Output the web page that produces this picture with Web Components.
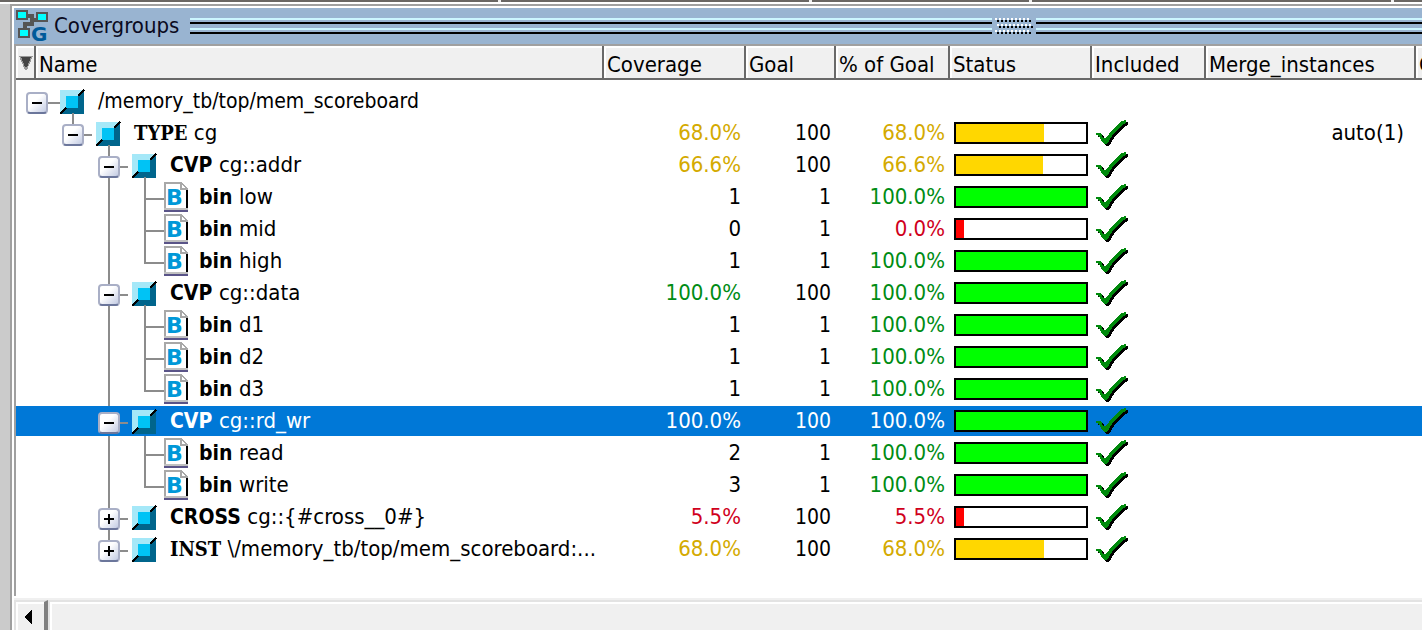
<!DOCTYPE html>
<html lang="en">
<head>
<meta charset="utf-8">
<title>Covergroups</title>
<style>
  html, body { height: 100%; margin: 0; }
  body { overflow: hidden; background: #fff; color: #000; font: 22px/32px "DejaVu Sans Condensed", "DejaVu Sans", sans-serif; }
</style>
</head>
<body>
<dock-pane>
  <pane-title slot="title">Covergroups</pane-title>
  <coverage-table></coverage-table>
  <scroll-strip slot="footer"></scroll-strip>
</dock-pane>

<script>
class Base extends HTMLElement {
  render(html) {
    if (!this.shadowRoot) this.attachShadow({ mode: 'open' });
    this.shadowRoot.innerHTML = html;
  }
}

/* Window frame round the docked pane */
customElements.define('dock-pane', class extends Base {
  connectedCallback() {
    this.render(`
      <style>
        :host { display: flex; flex-direction: column; height: 100vh; }
        .edge { display: grid; grid-template-columns: 500fr 310fr 218fr 361fr 28fr; gap: 0 3px; height: 2px; margin-bottom: 2px; flex: none; background: #f0f0f0; }
        .edge i { background: #696663; }
        .frame { flex: 1; min-height: 0; display: flex; background: #cbcbcb; }
        .pane { flex: 1; min-width: 0; margin-left: 10px; border: solid #a0a0a0; border-width: 2px 0 0 2px; padding: 2px 0 0 2px; background: #fff; display: flex; flex-direction: column; }
        .body { flex: 1; min-height: 0; overflow: hidden; border: solid #a0a0a0; border-width: 2px 0 0 2px; margin-bottom: 2px; }
      </style>
      <div class="edge"><i></i><i></i><i></i><i></i><i></i></div>
      <div class="frame"><div class="pane">
        <slot name="title"></slot>
        <div class="body"><slot></slot></div>
        <slot name="footer"></slot>
      </div></div>`);
  }
});

/* Title bar: icon, caption and drag grip */
customElements.define('pane-title', class extends Base {
  connectedCallback() {
    let dots = '';
    for (let r = 0; r < 3; r++) for (let c = 0; c < 9; c++) {
      const x = c * 4 + (r === 1 ? 2 : 0), y = r * 6;
      dots += `<path fill="#fff" d="M${x} ${y}h2v2h-2z"/><path fill="#000" d="M${x + 2} ${y + 2}h2v2h-2z"/>`;
    }
    this.render(`
      <style>
        :host { display: flex; align-items: center; height: 36px; flex: none; padding-left: 2px; background: #99b4d1; color: #0a0a20; }
        svg { display: block; flex: none; overflow: visible; }
        .caption { margin: 0 11px 0 6px; }
        .rail { flex: 1; display: grid; grid-template-columns: 802fr 38px 386fr; column-gap: 3px; height: 16px; }
        .line { background: linear-gradient(#ccf6ff 0 2px, transparent 2px 4px, #000 4px 6px, transparent 6px 10px, #ccf6ff 10px 12px, transparent 12px 14px, #000 14px 16px); }
      </style>
      <svg width="32" height="32" viewBox="0 0 32 32" aria-hidden="true">
        <path d="M10 6h6v4h6M16 9v5h-7v6" fill="none" stroke="#555" stroke-width="4"/>
        <path d="M0 0h12v10H0zM20 2h12v10H20zM2 18h12v10H2z" fill="#555"/>
        <path d="M2 2h8v6H2zM22 4h8v6h-8zM4 20h8v6H4z" fill="#0ff"/>
        <text x="15" y="31" font-family="DejaVu Sans" font-weight="bold" font-size="20" fill="#005a9a">G</text>
      </svg>
      <span class="caption"><slot></slot></span>
      <div class="rail"><div class="line"></div>
        <svg width="38" height="16" viewBox="0 0 38 16" shape-rendering="crispEdges">${dots}</svg>
        <div class="line"></div></div>`);
  }
});

/* Tree cell: guides, expander, node icon, label */
customElements.define('tree-node', class extends Base {
  connectedCallback() {
    const level = +this.getAttribute('level'), last = this.hasAttribute('last');
    const state = this.getAttribute('state'), leaf = !state;
    const selected = this.hasAttribute('selected');
    const g = [];
    if (level === 0) g.push('M32 18H44M57 28V32');
    if (level === 1) g.push('M57 0V8M68 18H76M93 28V32');
    if (level === 2) {
      g.push('M104 18H112');
      if (selected) g.push('M93 0V1M93 31V32M129 31V32');
      else g.push(last ? 'M93 0V8' : 'M93 0V32', state === 'open' ? 'M129 28V32' : '');
    }
    if (level === 3) g.push('M93 0V32', last ? 'M129 0V19' : 'M129 0V32', 'M129 18H148');
    this.render(`
      <style>
        :host { display: flex; position: relative; height: 32px; white-space: nowrap; }
        svg { display: block; flex: none; overflow: visible; }
        .guides { position: absolute; left: 0; top: 0; }
        .indent { flex: none; width: ${leaf ? 148 : 10 + 36 * level}px; }
        button { position: relative; flex: none; width: 22px; height: 22px; margin: 7px 12px 0 0; padding: 0; border: 2px solid #a9afc6; border-bottom-color: #6b769b; border-radius: 4px; background: linear-gradient(135deg, #fff 40%, #c3cbe3); }
        button svg { width: 18px; height: 18px; }
        .box { margin-top: 5px; }
        .file { margin-top: 1px; }
        .label { margin-left: ${leaf ? 11 : 14}px; }
      </style>
      <svg class="guides" width="160" height="32" shape-rendering="crispEdges"><path d="${g.join('')}" fill="none" stroke="#8c8c8c" stroke-width="2"/></svg>
      <span class="indent"></span>
      ${leaf ? `
      <svg class="file" width="24" height="30" viewBox="0 0 24 30" shape-rendering="crispEdges" aria-hidden="true">
        <path d="M0 0h18l6 7v19H0z" fill="#a8a8a8"/><path d="M2 2h14v6h6v18H2z" fill="#fff"/>
        <path d="M18 3v3h3z" fill="#fff"/>
        <path d="M22 8h2v18h-2z" fill="#000"/><path d="M0 26h24v2H0z" fill="#c0c0c0"/><path d="M0 28h24v2H0z" fill="#5a5488"/>
        <text x="2" y="23" font-family="DejaVu Sans" font-weight="bold" font-size="22" fill="#0098d8">B</text>
      </svg>` : `
      <button type="button" aria-label="${state === 'open' ? 'Collapse' : 'Expand'}" aria-expanded="${state === 'open'}"><svg viewBox="0 0 18 18" shape-rendering="crispEdges"><path d="M4 9H14${state === 'open' ? '' : 'M9 4V14'}" stroke="#000" stroke-width="2"/></svg></button>
      <svg class="box" width="24" height="24" viewBox="0 0 24 24" shape-rendering="crispEdges" aria-hidden="true">
        <path d="M0 0H24L0 24z" fill="#a5e8f8"/><path d="M24 0V24H0z" fill="#00658c"/>
        <path d="M24 0L18 6M6 18L0 24" stroke="#000" stroke-width="2"/><path d="M6 6h12v12H6z" fill="#00c3f5"/>
      </svg>`}
      <span class="label"><slot></slot></span>`);
  }
});

customElements.define('status-bar', class extends Base {
  connectedCallback() {
    const v = +this.getAttribute('value');
    const color = v >= 90 ? '#0f0' : v >= 50 ? '#ffd700' : '#f00';
    this.render(`
      <style>
        :host { display: block; box-sizing: border-box; width: 134px; height: 22px; border: 2px solid #000; background: #fff; }
        .fill { height: 100%; min-width: 8px; width: ${v}%; background: ${color}; }
      </style>
      <div class="fill" role="meter" aria-label="Status" aria-valuenow="${v}"></div>`);
  }
});

customElements.define('check-mark', class extends Base {
  connectedCallback() {
    const d = 'M0 14H4L6 16 7 19H10L13 15 19 8 25 2 30 1V4L27 5 22 10 16 17 11 25H8L5 21 3 17 0 16Z';
    this.render(`
      <style>:host { display: block; height: 28px; } svg { display: block; }</style>
      <svg width="34" height="28" viewBox="0 0 34 28" shape-rendering="crispEdges" role="img" aria-label="Included">
        <path d="${d}" fill="#000" transform="translate(2 2)"/><path d="${d}" fill="#008a0c"/>
      </svg>`);
  }
});

/* Horizontal scroll bar under the table */
customElements.define('scroll-strip', class extends Base {
  connectedCallback() {
    this.render(`
      <style>
        :host { display: flex; flex: none; height: 30px; border-top: 2px solid #f0f0f0; background: #f0f0f0; }
        button { width: 34px; padding: 0; border: solid; border-width: 2px 4px 0 2px; border-color: #e3e3e3 #808080 #e3e3e3 #e3e3e3; background: #f0f0f0; box-shadow: inset 2px 2px #fff; }
        svg { display: block; margin: 2px 0 0 8px; }
        .thumb { flex: 1; border: solid #e3e3e3; border-width: 2px 0 0 2px; box-shadow: inset 2px 2px #fff; }
      </style>
      <button type="button" aria-label="Scroll left"><svg width="8" height="14" viewBox="0 0 8 14" shape-rendering="crispEdges"><path d="M8 0V14L0 7z"/></svg></button>
      <div class="thumb"></div>`);
  }
});

const rows = [
  { l: 0, s: 'open', n: '/memory_tb/top/mem_scoreboard' },
  { l: 1, s: 'open', serif: 1, k: 'TYPE', n: 'cg', c: '68.0%', g: 100, p: '68.0%', m: 'auto(1)' },
  { l: 2, s: 'open', k: 'CVP', n: 'cg::addr', c: '66.6%', g: 100, p: '66.6%' },
  { l: 3, k: 'bin', n: 'low', c: '1', g: 1, p: '100.0%' },
  { l: 3, k: 'bin', n: 'mid', c: '0', g: 1, p: '0.0%' },
  { l: 3, k: 'bin', n: 'high', c: '1', g: 1, p: '100.0%', last: 1 },
  { l: 2, s: 'open', k: 'CVP', n: 'cg::data', c: '100.0%', g: 100, p: '100.0%' },
  { l: 3, k: 'bin', n: 'd1', c: '1', g: 1, p: '100.0%' },
  { l: 3, k: 'bin', n: 'd2', c: '1', g: 1, p: '100.0%' },
  { l: 3, k: 'bin', n: 'd3', c: '1', g: 1, p: '100.0%', last: 1 },
  { l: 2, s: 'open', k: 'CVP', n: 'cg::rd_wr', c: '100.0%', g: 100, p: '100.0%', sel: 1 },
  { l: 3, k: 'bin', n: 'read', c: '2', g: 1, p: '100.0%' },
  { l: 3, k: 'bin', n: 'write', c: '3', g: 1, p: '100.0%', last: 1 },
  { l: 2, s: 'closed', k: 'CROSS', n: 'cg::{#cross__0#}', c: '5.5%', g: 100, p: '5.5%' },
  { l: 2, s: 'closed', serif: 1, k: 'INST', n: '\\/memory_tb/top/mem_scoreboard:...', c: '68.0%', g: 100, p: '68.0%', last: 1 }
];

customElements.define('coverage-table', class extends Base {
  connectedCallback() {
    const tone = t => !t || !t.includes('%') ? '' : parseFloat(t) >= 90 ? 'good' : parseFloat(t) >= 50 ? 'fair' : 'poor';
    const body = rows.map(r => `
      <tr${r.sel ? ' class="sel" aria-selected="true"' : ''}>
        <td colspan="2"${r.l ? '' : ' class="root"'}><tree-node level="${r.l}"${r.s ? ` state="${r.s}"` : ''}${r.last ? ' last' : ''}${r.sel ? ' selected' : ''}>${r.k ? `<b${r.serif ? ' class="serif"' : ''}>${r.k} </b>` : ''}${r.n}</tree-node></td>
        <td class="num ${tone(r.c)}">${r.c || ''}</td>
        <td class="num goal">${r.g || ''}</td>
        <td class="num ${tone(r.p)}">${r.p || ''}</td>
        <td class="bar">${r.p ? `<status-bar value="${parseFloat(r.p)}"></status-bar>` : ''}</td>
        <td class="bar">${r.p ? '<check-mark></check-mark>' : ''}</td>
        <td class="num merge">${r.m || ''}</td><td></td>
      </tr>`).join('');
    this.render(`
      <style>
        :host { display: block; }
        table { width: 100%; table-layout: fixed; border-collapse: separate; border-spacing: 0; }
        th, td { padding: 0; overflow: hidden; white-space: nowrap; }
        th { height: 26px; padding: 6px 0 0 3px; line-height: 26px; font-weight: normal; text-align: left; background: #f0f0f0; border-right: 2px solid #696969; border-bottom: 2px solid #696969; box-shadow: inset 2px 2px #fff; }
        th:last-child { border-right: 0; overflow: visible; }
        th svg { display: block; margin-bottom: 4px; }
        tbody::before { content: ""; display: table-row; height: 5px; }
        td { height: 32px; }
        .num { text-align: right; padding-right: 5px; }
        .merge { padding-right: 12px; }
        .bar { padding: 0 0 0 4px; }
        .root, .goal { font-size: 21px; }
        .good { color: #008c14; } .fair { color: #d4aa00; } .poor { color: #d0001c; }
        .sel td { color: #fff; background: linear-gradient(transparent 1px, #0078d7 1px 31px, transparent 31px); }
        b { font-size: 21px; }
        .serif { font: bold 20px/32px "DejaVu Serif Condensed", "DejaVu Serif", serif; }
      </style>
      <table>
        <colgroup><col style="width:20px"><col style="width:568px"><col style="width:142px"><col style="width:90px"><col style="width:114px"><col style="width:142px"><col style="width:114px"><col style="width:210px"><col></colgroup>
        <thead><tr>
          <th aria-label="Sort"><svg width="14" height="14" viewBox="0 0 14 14" shape-rendering="crispEdges"><path d="M0 0H14L8 14H6z" fill="#999"/><path d="M2 1H12L8 11H6z" fill="#444"/></svg></th>
          <th>Name</th><th>Coverage</th><th>Goal</th><th>% of Goal</th><th>Status</th><th>Included</th><th>Merge_instances</th><th>C</th>
        </tr></thead>
        <tbody>${body}</tbody>
      </table>`);
  }
});
</script>
</body>
</html>
